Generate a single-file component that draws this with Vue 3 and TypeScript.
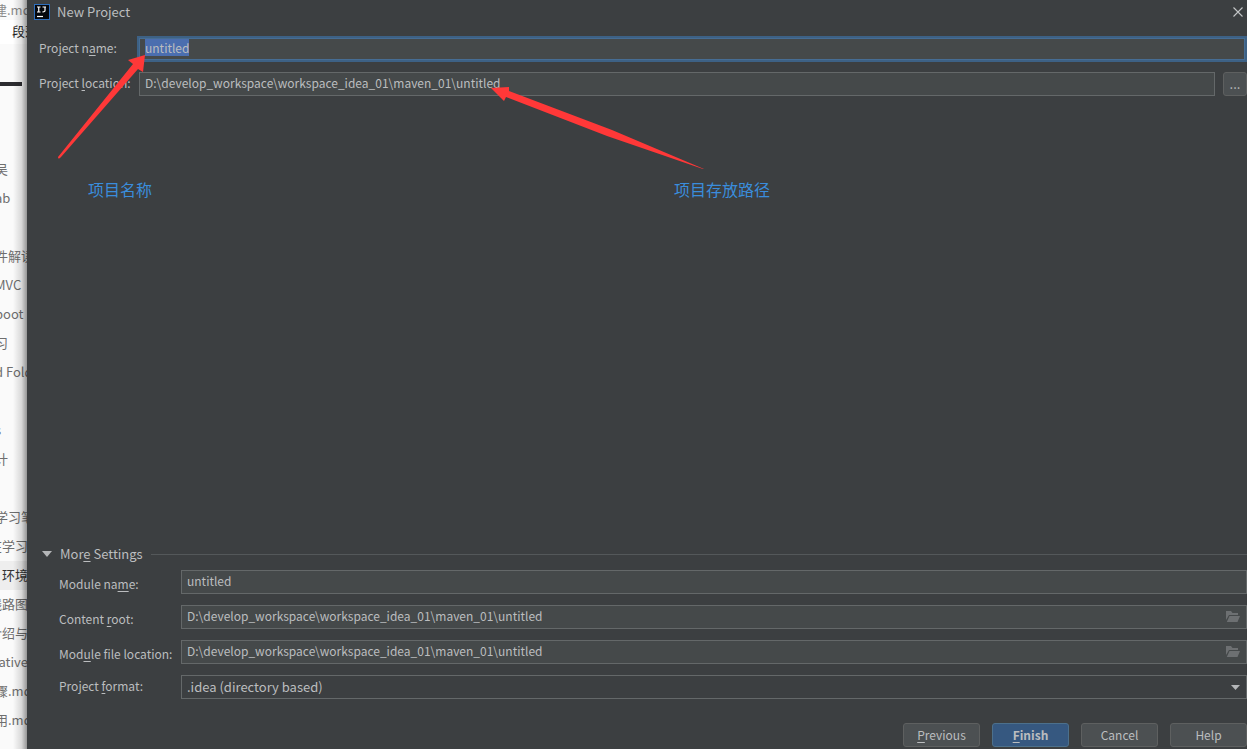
<script setup lang="ts">
import { onMounted, ref } from 'vue'

interface NoteRow {
  text: string
  deep?: boolean
  active?: boolean
}

const notes: NoteRow[] = [
  { text: '吴' },
  { text: 'ab' },
  { text: '' },
  { text: '件解读' },
  { text: 'MVC' },
  { text: 'boot' },
  { text: '习' },
  { text: 'd Folder' },
  { text: '' },
  { text: 's' },
  { text: '计' },
  { text: '' },
  { text: '学习笔' },
  { text: '在学习', deep: true },
  { text: '环境', active: true },
  { text: '线路图', deep: true },
  { text: '介绍与', deep: true },
  { text: 'Native', deep: true },
  { text: '骤.md' },
  { text: '用.md' },
]

const path = 'D:\\develop_workspace\\workspace_idea_01\\maven_01\\untitled'
const projectName = ref('untitled')
const projectLocation = ref(path)
const moduleName = ref('untitled')
const contentRoot = ref(path)
const moduleLocation = ref(path)
const format = ref('.idea (directory based)')
const nameInput = ref<HTMLInputElement | null>(null)

onMounted(() => {
  nameInput.value?.focus()
  nameInput.value?.select()
})
</script>

<template>
  <div class="screen">
    <aside class="notes">
      <div class="tab">建.md</div>
      <div class="tool">段落</div>
      <div class="rule"></div>
      <ul class="list">
        <li v-for="(n, i) in notes" :key="i" :class="{ deep: n.deep, active: n.active }">{{ n.text }}</li>
      </ul>
    </aside>

    <main class="dialog">
      <header class="titlebar">
        <svg class="logo" width="16" height="16" viewBox="0 0 16 16" aria-hidden="true">
          <rect width="16" height="16" fill="#2f6fbd" />
          <rect x="1" y="1" width="14" height="14" fill="#05070c" />
          <path d="M3 3h3.500M4.750 3v5M3 8h3.500M8.500 3h3.500M11 3v3.500q0 1.500-2.500 1.300" fill="none" stroke="#fff" stroke-width="1.200" />
          <path d="M3 12.500h6" stroke="#fff" stroke-width="1.200" />
        </svg>
        <h1>New Project</h1>
        <button class="close" type="button" aria-label="Close">
          <svg width="10" height="10" viewBox="0 0 10 10"><path d="M.5.5l9 9M9.500.5l-9 9" stroke="#c4c6c7" stroke-width="1.100" /></svg>
        </button>
      </header>

      <div class="project">
        <label for="pname">Project n<u>a</u>me:</label>
        <input id="pname" ref="nameInput" v-model="projectName" class="focused" type="text" spellcheck="false" />
        <label for="ploc">Project <u>l</u>ocation:</label>
        <div class="location">
          <input id="ploc" v-model="projectLocation" type="text" spellcheck="false" />
          <button class="browse" type="button">...</button>
        </div>
      </div>

      <section class="more">
        <button class="toggle" type="button" aria-expanded="true">
          <svg width="10" height="6" viewBox="0 0 10 6"><path d="M0 0h10L5 6z" fill="#b4b6b8" /></svg>
          <span>Mor<u>e</u> Settings</span>
        </button>
        <div class="settings">
          <label for="mname">Module na<u>m</u>e:</label>
          <input id="mname" v-model="moduleName" type="text" spellcheck="false" />
          <label for="croot">Content <u>r</u>oot:</label>
          <div class="field">
            <input id="croot" v-model="contentRoot" type="text" spellcheck="false" />
            <button class="folder" type="button" aria-label="Browse">
              <svg width="14" height="12" viewBox="0 0 14 12"><path d="M0 0h5l1.500 2H12v2H3L0 9zM3.500 5H14l-2.500 6H.8z" fill="#6d7072" /></svg>
            </button>
          </div>
          <label for="mloc">Mod<u>u</u>le file location:</label>
          <div class="field">
            <input id="mloc" v-model="moduleLocation" type="text" spellcheck="false" />
            <button class="folder" type="button" aria-label="Browse">
              <svg width="14" height="12" viewBox="0 0 14 12"><path d="M0 0h5l1.500 2H12v2H3L0 9zM3.500 5H14l-2.500 6H.8z" fill="#6d7072" /></svg>
            </button>
          </div>
          <label for="pformat">Project <u>f</u>ormat:</label>
          <div class="field">
            <select id="pformat" v-model="format">
              <option>.idea (directory based)</option>
            </select>
            <svg class="caret" width="9" height="5" viewBox="0 0 9 5"><path d="M0 0h9L4.500 5z" fill="#b4b6b8" /></svg>
          </div>
        </div>
      </section>

      <footer class="actions">
        <button type="button"><u>P</u>revious</button>
        <button type="button" class="primary"><u>F</u>inish</button>
        <button type="button">Cancel</button>
        <button type="button">Help</button>
      </footer>

      <svg class="arrows" width="720" height="180" viewBox="0 0 720 180" aria-hidden="true">
        <path d="M118 55L116 72L111 69L34 157Q31 160 31 157L106 64L101 60z" fill="#ff3838" />
        <path d="M464 88L482 87L482 91L585 130L677 169L676 169L580 136L479 97L477 101z" fill="#ff3838" />
      </svg>
      <p class="callout name">项目名称</p>
      <p class="callout place">项目存放路径</p>
    </main>
  </div>
</template>

<style>
body {
  margin: 0;
  background: #3c3f41;
}
</style>

<style scoped>
* {
  box-sizing: border-box;
}
.screen {
  display: flex;
  height: 100vh;
  overflow: hidden;
  color: #bbbdbf;
  font: 13px/18px "Noto Sans CJK SC", sans-serif;
}
.notes {
  width: 27px;
  flex: none;
  overflow: hidden;
  background: #fafafa;
  color: #6e6e6e;
  line-height: 20px;
  white-space: nowrap;
  position: relative;
}
.notes::after {
  content: "";
  position: absolute;
  inset: 0 0 0 auto;
  width: 14px;
  background: linear-gradient(to right, #0000, #0002 60%, #0006);
}
.tab {
  text-indent: -6px;
  color: #8a8a8a;
}
.tool {
  height: 24px;
  padding-left: 12px;
  line-height: 22px;
  color: #222;
  background: #fff;
}
.rule {
  width: 22px;
  height: 4px;
  margin-top: 38px;
  background: #2c2c30;
}
.list {
  list-style: none;
  margin: 69px 0 0;
  padding: 0;
}
.list li {
  height: 29px;
  line-height: 28px;
  text-indent: -5px;
}
.list .deep {
  text-indent: -11px;
}
.list .active {
  background: #eee;
  color: #333;
  text-indent: 2px;
}
.dialog {
  position: relative;
  flex: 1;
  min-width: 0;
  display: flex;
  flex-direction: column;
  background: #3c3f41;
}
.titlebar {
  display: flex;
  align-items: center;
  height: 24px;
  padding: 0 4px 0 7px;
  gap: 7px;
}
h1 {
  flex: 1;
  margin: 0;
  font-size: 13px;
  font-weight: 400;
}
button {
  font: inherit;
  color: inherit;
  margin: 0;
  padding: 0;
  border: 0;
  background: none;
}
.close {
  display: flex;
}
u {
  text-underline-offset: 2px;
}
input,
select {
  display: block;
  width: 100%;
  min-width: 0;
  height: 24px;
  margin: 0;
  padding: 0 5px 3px;
  border: 1px solid #646869;
  border-radius: 0;
  outline: 0;
  background: #45494a;
  color: inherit;
  font: inherit;
}
input,
label {
  font-size: 12px;
}
.project {
  display: grid;
  grid-template-columns: 98px 1fr;
  grid-template-rows: 26px 24px;
  row-gap: 10px;
  align-items: center;
  margin-top: 12px;
  padding-left: 12px;
}
.project label {
  padding-bottom: 2px;
  white-space: nowrap;
}
.project .focused {
  height: 26px;
  border: 2px solid #3d6185;
  box-shadow: inset 0 0 0 1px #466d94;
  padding: 0 6px 3px;
}
.focused::selection {
  background: #4b6eaf;
  color: #bbbdbf;
}
.location {
  display: flex;
  gap: 8px;
  padding-left: 2px;
}
.location input {
  flex: 1;
}
.browse {
  width: 24px;
  height: 24px;
  border: 1px solid #5e6060;
  border-radius: 3px;
  background: #4c5052;
}
.more {
  margin-top: auto;
  padding-left: 15px;
}
.toggle {
  display: flex;
  align-items: center;
  width: 100%;
  gap: 8px;
  height: 18px;
}
.toggle::after {
  content: "";
  flex: 1;
  height: 1px;
  background: #54585a;
}
.settings {
  display: grid;
  grid-template-columns: 122px 1fr;
  row-gap: 11px;
  margin-top: 7px;
  padding-left: 17px;
}
.settings label {
  padding-top: 5px;
  white-space: nowrap;
}
.settings label:last-of-type {
  padding-top: 2px;
}
.field {
  display: grid;
  align-items: center;
}
.field > * {
  grid-area: 1 / 1;
}
.folder {
  justify-self: end;
  margin-right: 7px;
  display: flex;
}
select {
  appearance: none;
  padding-bottom: 0;
  background: #3c3f41;
}
.caret {
  justify-self: end;
  margin-right: 7px;
  pointer-events: none;
}
.actions {
  display: flex;
  justify-content: flex-end;
  gap: 12px;
  padding: 24px 0 2px;
}
.actions button {
  width: 77px;
  height: 24px;
  border: 1px solid #5e6060;
  border-radius: 3px;
  background: #4c5052;
  font-size: 12px;
}
.actions .primary {
  background: #365880;
  border-color: #4c708c;
  font-weight: 700;
}
.arrows {
  position: absolute;
  left: 0;
  top: 0;
  pointer-events: none;
}
.callout {
  position: absolute;
  margin: 0;
  top: 177px;
  color: #3a8ddc;
  font-size: 16px;
  line-height: 24px;
}
.name {
  left: 61px;
}
.place {
  left: 647px;
}
</style>
